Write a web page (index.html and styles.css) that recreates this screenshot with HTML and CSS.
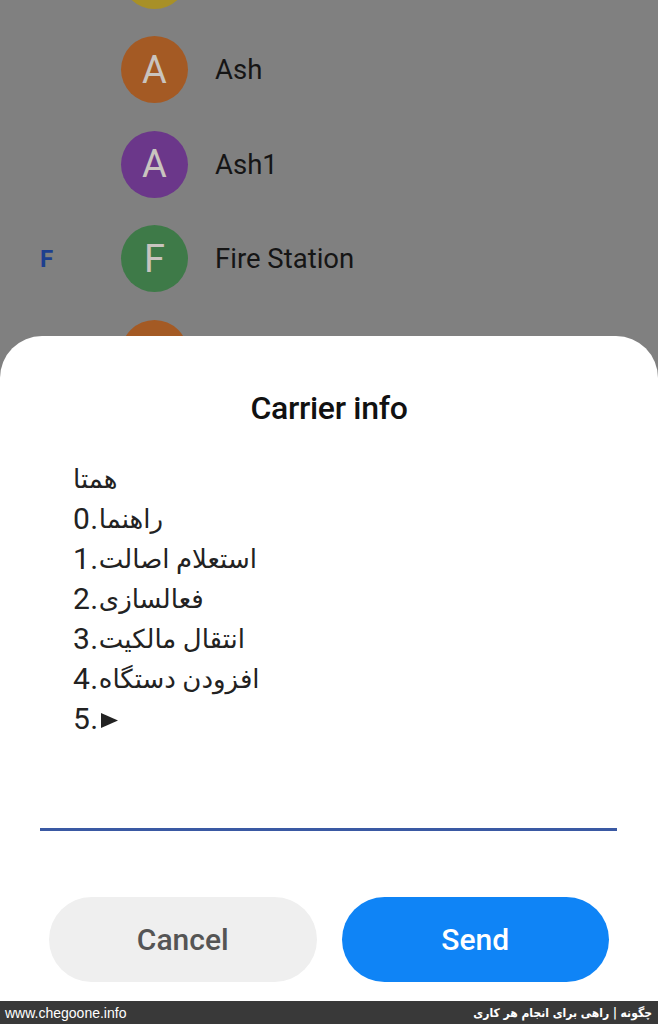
FILE: index.html
```html
<!DOCTYPE html>
<html lang="en">
<head>
<meta charset="utf-8">
<title>Carrier info</title>
<link rel="stylesheet" href="styles.css">
</head>
<body>
<div class="page">
  <div class="list">
    <div class="row"><span class="section"></span><span class="avatar yellow"></span><span class="name"></span></div>
    <div class="row"><span class="section"></span><span class="avatar orange">A</span><span class="name">Ash</span></div>
    <div class="row"><span class="section"></span><span class="avatar purple">A</span><span class="name">Ash1</span></div>
    <div class="row"><span class="section">F</span><span class="avatar green">F</span><span class="name">Fire Station</span></div>
    <div class="row"><span class="section"></span><span class="avatar orange">H</span><span class="name"></span></div>
  </div>
  <div class="sheet">
    <h1 class="title">Carrier info</h1>
    <div class="message" dir="ltr">
      <div class="line">همتا</div>
      <div class="line"><span class="num">0.</span>راهنما</div>
      <div class="line"><span class="num">1.</span>استعلام اصالت</div>
      <div class="line"><span class="num">2.</span>فعالسازی</div>
      <div class="line"><span class="num">3.</span>انتقال مالکیت</div>
      <div class="line"><span class="num">4.</span>افزودن دستگاه</div>
      <div class="line"><span class="num">5.</span><svg class="tri" width="17" height="15" viewBox="0 0 17 15"><polygon points="0,0 17,7.5 0,15" fill="#222"/></svg></div>
    </div>
    <div class="input"></div>
    <div class="buttons">
      <button class="btn cancel">Cancel</button>
      <button class="btn send">Send</button>
    </div>
  </div>
  <div class="footer">
    <span class="site">www.chegoone.info</span>
    <span class="slogan" dir="rtl">چگونه | راهی برای انجام هر کاری</span>
  </div>
</div>
</body>
</html>
```
FILE: styles.css
```css
html, body {
  margin: 0;
  padding: 0;
}
body {
  width: 658px;
  height: 1024px;
  overflow: hidden;
  background: #808080;
  font-family: Roboto, "DejaVu Sans", sans-serif;
}
.page {
  display: flex;
  flex-direction: column;
  height: 1024px;
}
.list {
  height: 336px;
  flex: none;
  overflow: hidden;
}
.list .row:first-child {
  margin-top: -72px;
}
.row {
  height: 94.5px;
  display: flex;
  align-items: center;
}
.section {
  width: 121px;
  box-sizing: border-box;
  padding-left: 40px;
  color: #1d3f8f;
  font-weight: 700;
  font-size: 24px;
}
.avatar {
  width: 67px;
  height: 67px;
  border-radius: 50%;
  display: flex;
  align-items: center;
  justify-content: center;
  color: #c9c4bf;
  font-size: 38px;
  flex: none;
}
.yellow { background: #a89027; }
.orange { background: #a45a24; }
.purple { background: #6b378a; }
.green { background: #3e7a48; }
.name {
  margin-left: 27px;
  font-size: 27.5px;
  color: #151515;
}
.sheet {
  flex: 1;
  background: #fff;
  border-radius: 42px 42px 0 0;
  display: flex;
  flex-direction: column;
}
.title {
  margin: 54px 0 0;
  text-align: center;
  font-size: 32px;
  font-weight: 500;
  line-height: 36px;
  color: #111;
  letter-spacing: -0.3px;
}
.message {
  margin: 33px 0 0 73px;
  font-size: 26px;
  line-height: 40px;
  color: #222;
}
.line {
  height: 40px;
  display: flex;
  align-items: center;
}
.num {
  font-family: Roboto, sans-serif;
  font-size: 30px;
  letter-spacing: 0.5px;
}
.tri {
  margin-left: 2px;
  margin-top: 2px;
}
.input {
  margin: 89px 41px 0 40px;
  border-bottom: 3px solid #3a59a3;
}
.buttons {
  display: flex;
  gap: 25px;
  padding: 0 49px;
  margin-top: 66px;
}
.btn {
  flex: 1;
  height: 85px;
  border: none;
  border-radius: 43px;
  font-family: Roboto, sans-serif;
  font-size: 30px;
  font-weight: 500;
}
.cancel {
  background: #efefef;
  color: #555;
}
.send {
  background: #0f84f6;
  color: #fff;
}
.footer {
  height: 23px;
  flex: none;
  background: #393939;
  color: #fff;
  display: flex;
  align-items: center;
  justify-content: space-between;
  padding: 0 6px 0 5px;
  font-size: 14px;
}
.site {
  font-family: "Liberation Sans", sans-serif;
}
.slogan {
  font-family: "DejaVu Sans Condensed", "DejaVu Sans", sans-serif;
  font-stretch: condensed;
  font-weight: 700;
  font-size: 12px;
}
```
